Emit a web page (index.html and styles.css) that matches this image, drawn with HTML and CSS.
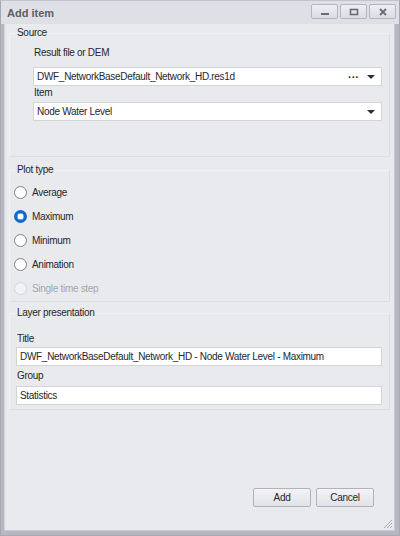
FILE: index.html
```html
<!DOCTYPE html>
<html>
<head>
<meta charset="utf-8">
<title>Add item</title>
<link rel="stylesheet" href="styles.css">
</head>
<body>
<div class="window">
  <div class="titlebar">
    <span class="title">Add item</span>
    <div class="title-buttons">
      <button class="tbtn" aria-label="Minimize">
        <svg width="10" height="8" viewBox="0 0 10 8"><rect x="1" y="5" width="8" height="2" fill="#6b6c72"/></svg>
      </button>
      <button class="tbtn" aria-label="Maximize">
        <svg width="10" height="8" viewBox="0 0 10 8"><rect x="1.5" y="1.5" width="7" height="5" fill="none" stroke="#6b6c72" stroke-width="1.6"/></svg>
      </button>
      <button class="tbtn" aria-label="Close">
        <svg width="10" height="8" viewBox="0 0 10 8"><path d="M2 1 L8 7 M8 1 L2 7" stroke="#6b6c72" stroke-width="1.8"/></svg>
      </button>
    </div>
  </div>

  <div class="content">
    <fieldset class="group group-source">
      <legend>Source</legend>
      <div class="group-body">
        <div class="field-label first">Result file or DEM</div>
        <div class="combo">
          <span class="combo-text">DWF_NetworkBaseDefault_Network_HD.res1d</span>
          <span class="ellipsis">&middot;&middot;&middot;</span>
          <span class="arrow"></span>
        </div>
        <div class="field-label">Item</div>
        <div class="combo">
          <span class="combo-text">Node Water Level</span>
          <span class="arrow"></span>
        </div>
      </div>
    </fieldset>

    <fieldset class="group group-plot">
      <legend>Plot type</legend>
      <div class="group-body">
        <div class="radio"><span class="dot"></span>Average</div>
        <div class="radio checked"><span class="dot"></span>Maximum</div>
        <div class="radio"><span class="dot"></span>Minimum</div>
        <div class="radio"><span class="dot"></span>Animation</div>
        <div class="radio disabled"><span class="dot"></span>Single time step</div>
      </div>
    </fieldset>

    <fieldset class="group group-layer">
      <legend>Layer presentation</legend>
      <div class="group-body">
        <div class="field-label first">Title</div>
        <div class="textbox">DWF_NetworkBaseDefault_Network_HD - Node Water Level - Maximum</div>
        <div class="field-label">Group</div>
        <div class="textbox">Statistics</div>
      </div>
    </fieldset>

    <div class="spacer"></div>

    <div class="actions">
      <button class="btn">Add</button>
      <button class="btn">Cancel</button>
    </div>
    <div class="grip">
      <svg width="12" height="12" viewBox="0 0 12 12">
        <path d="M11 3 L3 11 M11 6 L6 11 M11 9 L9 11" stroke="#a9aab2" stroke-width="1"/>
      </svg>
    </div>
  </div>
</div>
</body>
</html>
```

FILE: styles.css
```css
html, body {
  margin: 0;
  padding: 0;
  width: 400px;
  height: 536px;
  overflow: hidden;
  background: #e9eaee;
}

.window {
  box-sizing: border-box;
  width: 400px;
  height: 536px;
  display: flex;
  flex-direction: column;
  font-family: "Liberation Sans", Arial, sans-serif;
  font-size: 10px;
  letter-spacing: -0.3px;
  color: #26262c;
  background: #b6b7c1;
  border: 1px solid #a7a8b2;
  border-top-color: #c2c3cc;
}

.titlebar {
  height: 23px;
  flex: none;
  display: flex;
  align-items: center;
  justify-content: space-between;
  padding: 0 3px 0 6px;
  background: #dfe0e6;
}

.title {
  font-weight: bold;
  font-size: 11px;
  letter-spacing: 0;
  color: #5d5e64;
}

.title-buttons {
  display: flex;
  gap: 2px;
  margin-top: -2px;
}

.tbtn {
  width: 27px;
  height: 15px;
  padding: 0;
  display: flex;
  align-items: center;
  justify-content: center;
  border: 1px solid #b4b5be;
  border-radius: 2px;
  background: linear-gradient(#eeeff2, #dcdde3);
}

.content {
  flex: 1;
  position: relative;
  display: flex;
  flex-direction: column;
  margin: 0 4px 4px 3px;
  padding: 2px 4px 0 4px;
  background: #e9eaee;
  border-left: 1px solid #d2d3da;
  border-right: 1px solid #c8c9d1;
  border-bottom: 1px solid #c8c9d1;
}

.group {
  margin: 0;
  padding: 0;
  min-width: 0;
  border: 1px solid #f2f2f5;
  border-right-color: #dcdde3;
  border-bottom-color: #dcdde3;
}

.group legend {
  margin-left: 5px;
  padding: 0 2px;
  line-height: 14px;
}

.group-source .group-body {
  padding: 0 7px 35px 23px;
}

.group-plot {
  margin-top: 6px;
}

.group-plot .group-body {
  padding: 3px 0 1px 4px;
}

.group-layer {
  margin-top: 4px;
}

.group-layer .group-body {
  padding: 0 7px 4px 6px;
}

.field-label {
  line-height: 14px;
  height: 14px;
  padding-left: 1px;
  margin-bottom: 2px;
}

.field-label.first {
  margin-top: 6px;
  margin-bottom: 7px;
}

.group-layer .field-label {
  margin-top: 3px;
  margin-bottom: 3px;
}

.group-layer .field-label.first {
  margin-top: 12px;
  margin-bottom: 1px;
}

.combo,
.textbox {
  box-sizing: border-box;
  height: 19px;
  display: flex;
  align-items: center;
  padding: 0 6px 0 3px;
  background: #ffffff;
  border: 1px solid #d3d4da;
  white-space: nowrap;
  overflow: hidden;
}

.combo-text {
  flex: 1;
  overflow: hidden;
}

.ellipsis {
  font-weight: bold;
  font-size: 11px;
  letter-spacing: 0;
  margin-right: 8px;
}

.arrow {
  width: 0;
  height: 0;
  border-left: 4px solid transparent;
  border-right: 4px solid transparent;
  border-top: 4px solid #2f2f35;
}

.radio {
  height: 24px;
  display: flex;
  align-items: center;
  gap: 5px;
}

.radio .dot {
  box-sizing: border-box;
  width: 13px;
  height: 13px;
  border-radius: 50%;
  border: 1px solid #7f8087;
  background: #ffffff;
  flex: none;
}

.radio.checked .dot {
  border: 3px solid #1467c9;
  background: #ffffff;
  box-shadow: inset 0 0 0 0.5px #1467c9;
}

.radio.disabled {
  color: #a4a5aa;
}

.radio.disabled .dot {
  border-color: #d4d5da;
  background: #f3f3f5;
}

.spacer {
  flex: 1;
}

.actions {
  display: flex;
  justify-content: flex-end;
  gap: 5px;
  padding-right: 16px;
  margin-bottom: 23px;
}

.btn {
  box-sizing: border-box;
  width: 58px;
  height: 19px;
  padding: 0;
  font-family: inherit;
  font-size: 10px;
  letter-spacing: -0.3px;
  color: #26262c;
  border: 1px solid #b1b2bb;
  border-radius: 2px;
  background: linear-gradient(#f3f3f6, #e1e2e7);
}

.grip {
  position: absolute;
  right: 1px;
  bottom: 1px;
  width: 12px;
  height: 12px;
}
```
